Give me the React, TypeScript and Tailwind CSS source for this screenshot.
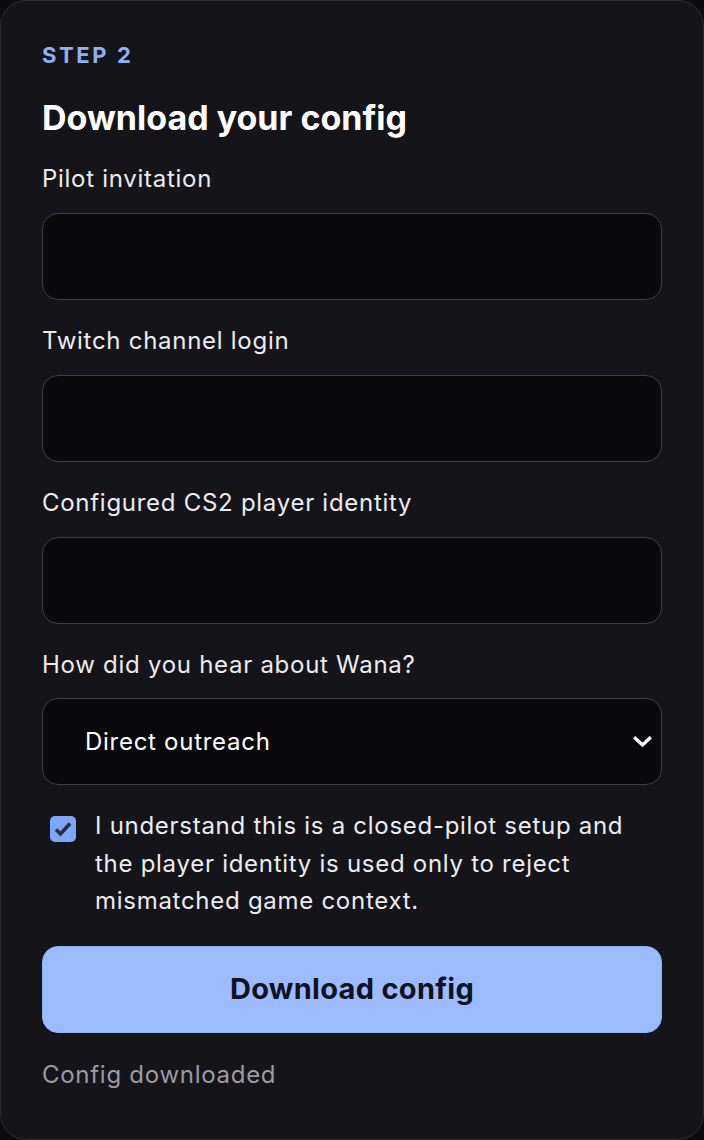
import React from "react";

function Field({ label }: { label: string }) {
  return (
    <div className="flex flex-col gap-[19px]">
      <label className="text-[24px] leading-[30px] tracking-[0.03em] text-[#ececf0]">{label}</label>
      <input className="h-[87px] w-full rounded-[16px] border border-[#3e3e43] bg-[#0a0a0c] px-[20px] text-[24px] text-white outline-none" />
    </div>
  );
}

export default function App() {
  return (
    <div className="min-h-[1140px] w-[704px] bg-[#0b0b0d]" style={{ fontFamily: "Inter, 'Noto Sans', sans-serif" }}>
      <div className="flex h-[1140px] w-[704px] flex-col rounded-[26px] border border-[#2d2d32] bg-[#151519] px-[41px] pt-[40px]">
        <div className="text-[22px] font-bold leading-[28px] tracking-[0.12em] text-[#8fb0f7]">STEP 2</div>
        <h1 className="mt-[29px] text-[34px] font-bold leading-[40px] text-white">Download your config</h1>
        <div className="mt-[26px] flex flex-col gap-[26px]">
          <Field label="Pilot invitation" />
          <Field label="Twitch channel login" />
          <Field label="Configured CS2 player identity" />
          <div className="flex flex-col gap-[18px]">
            <label className="text-[24px] leading-[30px] tracking-[0.03em] text-[#ececf0]">How did you hear about Wana?</label>
            <div className="relative flex h-[87px] w-full items-center rounded-[16px] border border-[#3e3e43] bg-[#0a0a0c] pl-[42px]">
              <span className="text-[24px] tracking-[0.03em] text-white">Direct outreach</span>
              <svg className="absolute right-[9px] top-1/2 -mt-[7px]" width="19" height="14" viewBox="0 0 19 14" fill="none">
                <path d="M2.5 3.5L9.5 10L16.5 3.5" stroke="white" strokeWidth="3.4" strokeLinecap="square" />
              </svg>
            </div>
          </div>
        </div>
        <div className="mt-[22px] flex gap-[19px] pl-[8px]">
          <div className="mt-[9px] flex h-[26px] w-[26px] shrink-0 items-center justify-center rounded-[5px] bg-[#7ea6fb]">
            <svg width="20" height="18" viewBox="0 0 20 18" fill="none">
              <path d="M3 9.5L7.5 14L17 3.5" stroke="#2e2e33" strokeWidth="3.6" />
            </svg>
          </div>
          <p className="text-[24px] leading-[37.5px] tracking-[0.03em] text-[#ececf0]">
            I understand this is a closed-pilot setup and the player identity is used only to reject mismatched game context.
          </p>
        </div>
        <button className="mt-[26px] flex h-[87px] w-full items-center justify-center rounded-[16px] border border-[#8fb0f7] bg-[#9dbbff] text-[29px] font-bold tracking-[0.01em] text-[#0f1220]">
          Download config
        </button>
        <div className="mt-[27px] text-[24px] leading-[30px] tracking-[0.03em] text-[#9b9ba3]">Config downloaded</div>
      </div>
    </div>
  );
}
